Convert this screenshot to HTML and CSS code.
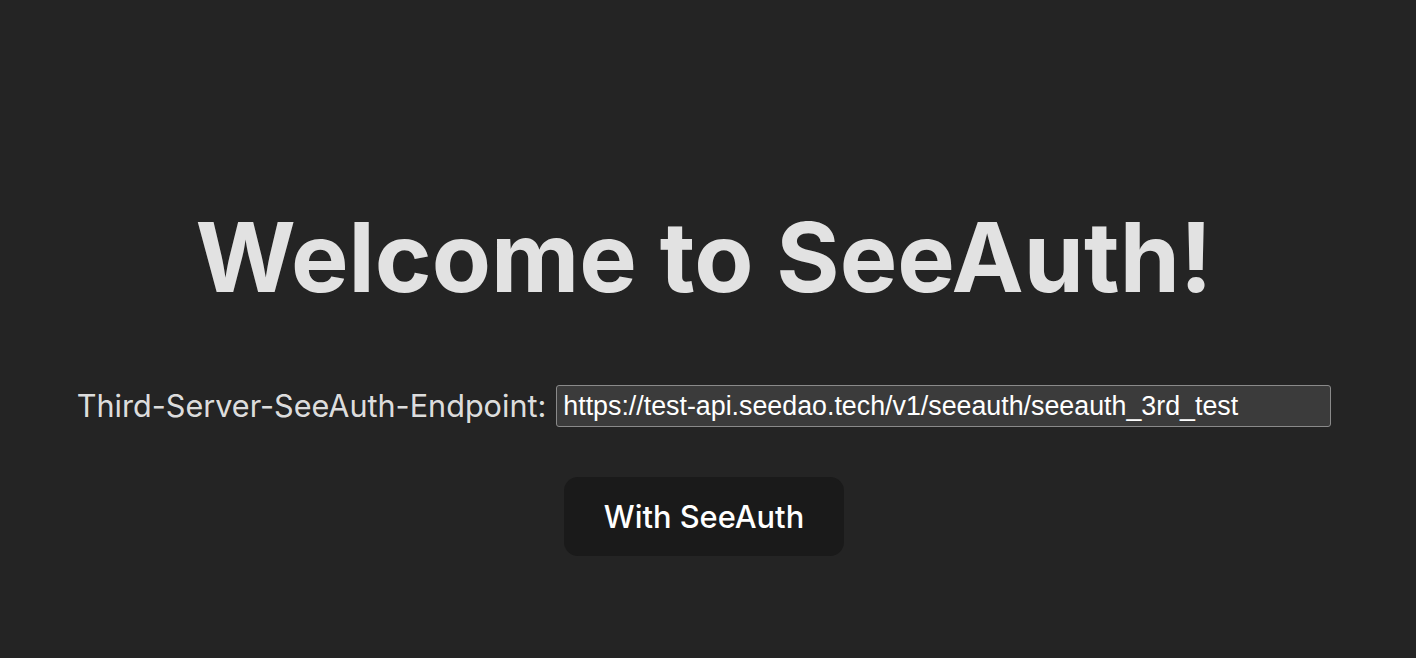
FILE: index.html
```html
<!DOCTYPE html>
<html lang="en">
<head>
<meta charset="utf-8">
<title>SeeAuth</title>
<link rel="stylesheet" href="styles.css">
</head>
<body>
<main class="app">
  <h1 class="title">Welcome to SeeAuth!</h1>
  <div class="endpoint-row">
    <label class="endpoint-label" for="endpoint">Third-Server-SeeAuth-Endpoint:</label>
    <input class="endpoint-input" id="endpoint" type="text" value="https://test-api.seedao.tech/v1/seeauth/seeauth_3rd_test">
  </div>
  <button class="auth-button" type="button">With SeeAuth</button>
</main>
</body>
</html>
```

FILE: styles.css
```css
html, body {
  margin: 0;
  padding: 0;
  background: #242424;
}

body {
  font-family: Inter, "Liberation Sans", sans-serif;
  color: rgba(255, 255, 255, 0.87);
  min-height: 658px;
}

.app {
  display: flex;
  flex-direction: column;
  align-items: center;
  padding-top: 204px;
  padding-right: 8px;
}

.title {
  margin: 0;
  font-size: 96.7px;
  line-height: 106px;
  font-weight: 700;
}

.endpoint-row {
  display: flex;
  align-items: center;
  gap: 10px;
  margin-top: 75px;
  height: 42px;
}

.endpoint-label {
  font-size: 30.6px;
  line-height: 42px;
  font-weight: 400;
}

.endpoint-input {
  box-sizing: border-box;
  width: 775px;
  height: 42px;
  padding: 0 6px;
  border: 1.75px solid #8a8a8a;
  border-radius: 3px;
  background: #3b3b3b;
  color: #ffffff;
  font-family: "Liberation Sans", Arial, sans-serif;
  font-size: 26.8px;
  outline: none;
}

.auth-button {
  margin-top: 50px;
  box-sizing: border-box;
  height: 79px;
  padding: 0 39px;
  border: 1.75px solid transparent;
  border-radius: 14px;
  background: #1a1a1a;
  color: #ffffff;
  font-family: Inter, "Liberation Sans", sans-serif;
  font-size: 30.8px;
  font-weight: 500;
  line-height: 42px;
  cursor: pointer;
}
```
